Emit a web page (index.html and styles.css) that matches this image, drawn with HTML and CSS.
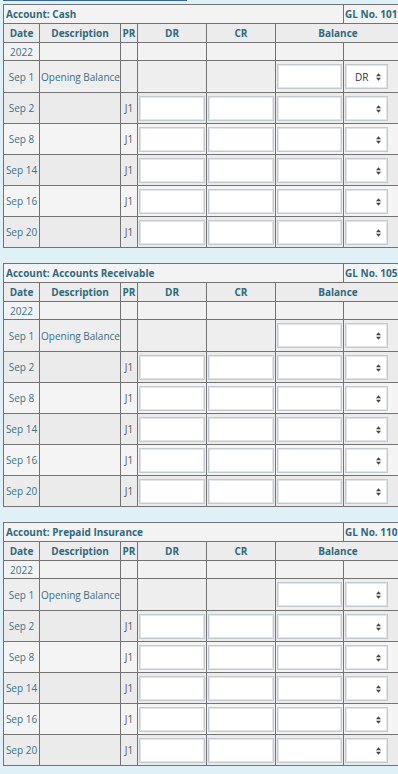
FILE: index.html
```html
<!DOCTYPE html>
<html>
<head>
<meta charset="utf-8">
<link rel="stylesheet" href="styles.css">
</head>
<body>
<div class="topline"></div>

<table class="ledger">
  <colgroup><col class="c-date"><col class="c-desc"><col class="c-pr"><col class="c-amt"><col class="c-amt"><col class="c-bal"><col class="c-sel"></colgroup>
  <tr class="title"><th colspan="6" class="acct">Account: Cash</th><th class="gl">GL No. 101</th></tr>
  <tr class="head"><th>Date</th><th>Description</th><th>PR</th><th>DR</th><th>CR</th><th colspan="2">Balance</th></tr>
  <tr class="year"><td class="date">2022</td><td></td><td></td><td></td><td></td><td></td><td></td></tr>
  <tr class="open"><td class="date">Sep 1</td><td class="desc">Opening Balance</td><td></td><td></td><td></td><td class="in"><input type="text"></td><td class="in"><span class="sel"><select><option>DR</option></select><svg class="arr" width="5" height="8" viewBox="0 0 5 8"><path d="M0 3.2 L2.5 0.2 L5 3.2Z M0 4.8 L2.5 7.8 L5 4.8Z"/></svg></span></td></tr>
  <tr class="dk"><td class="date">Sep 2</td><td></td><td class="pr">J1</td><td class="in"><input type="text"></td><td class="in"><input type="text"></td><td class="in"><input type="text"></td><td class="in"><span class="sel"><select><option></option></select><svg class="arr" width="5" height="8" viewBox="0 0 5 8"><path d="M0 3.2 L2.5 0.2 L5 3.2Z M0 4.8 L2.5 7.8 L5 4.8Z"/></svg></span></td></tr>
  <tr class="lt"><td class="date">Sep 8</td><td></td><td class="pr">J1</td><td class="in"><input type="text"></td><td class="in"><input type="text"></td><td class="in"><input type="text"></td><td class="in"><span class="sel"><select><option></option></select><svg class="arr" width="5" height="8" viewBox="0 0 5 8"><path d="M0 3.2 L2.5 0.2 L5 3.2Z M0 4.8 L2.5 7.8 L5 4.8Z"/></svg></span></td></tr>
  <tr class="dk"><td class="date">Sep 14</td><td></td><td class="pr">J1</td><td class="in"><input type="text"></td><td class="in"><input type="text"></td><td class="in"><input type="text"></td><td class="in"><span class="sel"><select><option></option></select><svg class="arr" width="5" height="8" viewBox="0 0 5 8"><path d="M0 3.2 L2.5 0.2 L5 3.2Z M0 4.8 L2.5 7.8 L5 4.8Z"/></svg></span></td></tr>
  <tr class="lt"><td class="date">Sep 16</td><td></td><td class="pr">J1</td><td class="in"><input type="text"></td><td class="in"><input type="text"></td><td class="in"><input type="text"></td><td class="in"><span class="sel"><select><option></option></select><svg class="arr" width="5" height="8" viewBox="0 0 5 8"><path d="M0 3.2 L2.5 0.2 L5 3.2Z M0 4.8 L2.5 7.8 L5 4.8Z"/></svg></span></td></tr>
  <tr class="dk"><td class="date">Sep 20</td><td></td><td class="pr">J1</td><td class="in"><input type="text"></td><td class="in"><input type="text"></td><td class="in"><input type="text"></td><td class="in"><span class="sel"><select><option></option></select><svg class="arr" width="5" height="8" viewBox="0 0 5 8"><path d="M0 3.2 L2.5 0.2 L5 3.2Z M0 4.8 L2.5 7.8 L5 4.8Z"/></svg></span></td></tr>
</table>

<table class="ledger">
  <colgroup><col class="c-date"><col class="c-desc"><col class="c-pr"><col class="c-amt"><col class="c-amt"><col class="c-bal"><col class="c-sel"></colgroup>
  <tr class="title"><th colspan="6" class="acct">Account: Accounts Receivable</th><th class="gl">GL No. 105</th></tr>
  <tr class="head"><th>Date</th><th>Description</th><th>PR</th><th>DR</th><th>CR</th><th colspan="2">Balance</th></tr>
  <tr class="year"><td class="date">2022</td><td></td><td></td><td></td><td></td><td></td><td></td></tr>
  <tr class="open"><td class="date">Sep 1</td><td class="desc">Opening Balance</td><td></td><td></td><td></td><td class="in"><input type="text"></td><td class="in"><span class="sel"><select><option></option></select><svg class="arr" width="5" height="8" viewBox="0 0 5 8"><path d="M0 3.2 L2.5 0.2 L5 3.2Z M0 4.8 L2.5 7.8 L5 4.8Z"/></svg></span></td></tr>
  <tr class="dk"><td class="date">Sep 2</td><td></td><td class="pr">J1</td><td class="in"><input type="text"></td><td class="in"><input type="text"></td><td class="in"><input type="text"></td><td class="in"><span class="sel"><select><option></option></select><svg class="arr" width="5" height="8" viewBox="0 0 5 8"><path d="M0 3.2 L2.5 0.2 L5 3.2Z M0 4.8 L2.5 7.8 L5 4.8Z"/></svg></span></td></tr>
  <tr class="lt"><td class="date">Sep 8</td><td></td><td class="pr">J1</td><td class="in"><input type="text"></td><td class="in"><input type="text"></td><td class="in"><input type="text"></td><td class="in"><span class="sel"><select><option></option></select><svg class="arr" width="5" height="8" viewBox="0 0 5 8"><path d="M0 3.2 L2.5 0.2 L5 3.2Z M0 4.8 L2.5 7.8 L5 4.8Z"/></svg></span></td></tr>
  <tr class="dk"><td class="date">Sep 14</td><td></td><td class="pr">J1</td><td class="in"><input type="text"></td><td class="in"><input type="text"></td><td class="in"><input type="text"></td><td class="in"><span class="sel"><select><option></option></select><svg class="arr" width="5" height="8" viewBox="0 0 5 8"><path d="M0 3.2 L2.5 0.2 L5 3.2Z M0 4.8 L2.5 7.8 L5 4.8Z"/></svg></span></td></tr>
  <tr class="lt"><td class="date">Sep 16</td><td></td><td class="pr">J1</td><td class="in"><input type="text"></td><td class="in"><input type="text"></td><td class="in"><input type="text"></td><td class="in"><span class="sel"><select><option></option></select><svg class="arr" width="5" height="8" viewBox="0 0 5 8"><path d="M0 3.2 L2.5 0.2 L5 3.2Z M0 4.8 L2.5 7.8 L5 4.8Z"/></svg></span></td></tr>
  <tr class="dk"><td class="date">Sep 20</td><td></td><td class="pr">J1</td><td class="in"><input type="text"></td><td class="in"><input type="text"></td><td class="in"><input type="text"></td><td class="in"><span class="sel"><select><option></option></select><svg class="arr" width="5" height="8" viewBox="0 0 5 8"><path d="M0 3.2 L2.5 0.2 L5 3.2Z M0 4.8 L2.5 7.8 L5 4.8Z"/></svg></span></td></tr>
</table>

<table class="ledger">
  <colgroup><col class="c-date"><col class="c-desc"><col class="c-pr"><col class="c-amt"><col class="c-amt"><col class="c-bal"><col class="c-sel"></colgroup>
  <tr class="title"><th colspan="6" class="acct">Account: Prepaid Insurance</th><th class="gl">GL No. 110</th></tr>
  <tr class="head"><th>Date</th><th>Description</th><th>PR</th><th>DR</th><th>CR</th><th colspan="2">Balance</th></tr>
  <tr class="year"><td class="date">2022</td><td></td><td></td><td></td><td></td><td></td><td></td></tr>
  <tr class="open"><td class="date">Sep 1</td><td class="desc">Opening Balance</td><td></td><td></td><td></td><td class="in"><input type="text"></td><td class="in"><span class="sel"><select><option></option></select><svg class="arr" width="5" height="8" viewBox="0 0 5 8"><path d="M0 3.2 L2.5 0.2 L5 3.2Z M0 4.8 L2.5 7.8 L5 4.8Z"/></svg></span></td></tr>
  <tr class="dk"><td class="date">Sep 2</td><td></td><td class="pr">J1</td><td class="in"><input type="text"></td><td class="in"><input type="text"></td><td class="in"><input type="text"></td><td class="in"><span class="sel"><select><option></option></select><svg class="arr" width="5" height="8" viewBox="0 0 5 8"><path d="M0 3.2 L2.5 0.2 L5 3.2Z M0 4.8 L2.5 7.8 L5 4.8Z"/></svg></span></td></tr>
  <tr class="lt"><td class="date">Sep 8</td><td></td><td class="pr">J1</td><td class="in"><input type="text"></td><td class="in"><input type="text"></td><td class="in"><input type="text"></td><td class="in"><span class="sel"><select><option></option></select><svg class="arr" width="5" height="8" viewBox="0 0 5 8"><path d="M0 3.2 L2.5 0.2 L5 3.2Z M0 4.8 L2.5 7.8 L5 4.8Z"/></svg></span></td></tr>
  <tr class="dk"><td class="date">Sep 14</td><td></td><td class="pr">J1</td><td class="in"><input type="text"></td><td class="in"><input type="text"></td><td class="in"><input type="text"></td><td class="in"><span class="sel"><select><option></option></select><svg class="arr" width="5" height="8" viewBox="0 0 5 8"><path d="M0 3.2 L2.5 0.2 L5 3.2Z M0 4.8 L2.5 7.8 L5 4.8Z"/></svg></span></td></tr>
  <tr class="lt"><td class="date">Sep 16</td><td></td><td class="pr">J1</td><td class="in"><input type="text"></td><td class="in"><input type="text"></td><td class="in"><input type="text"></td><td class="in"><span class="sel"><select><option></option></select><svg class="arr" width="5" height="8" viewBox="0 0 5 8"><path d="M0 3.2 L2.5 0.2 L5 3.2Z M0 4.8 L2.5 7.8 L5 4.8Z"/></svg></span></td></tr>
  <tr class="dk"><td class="date">Sep 20</td><td></td><td class="pr">J1</td><td class="in"><input type="text"></td><td class="in"><input type="text"></td><td class="in"><input type="text"></td><td class="in"><span class="sel"><select><option></option></select><svg class="arr" width="5" height="8" viewBox="0 0 5 8"><path d="M0 3.2 L2.5 0.2 L5 3.2Z M0 4.8 L2.5 7.8 L5 4.8Z"/></svg></span></td></tr>
</table>
</body>
</html>
```
FILE: styles.css
```css
html, body {
  margin: 0;
  padding: 0;
  background: #dff0f7;
  font-family: "Open Sans", Lato, sans-serif;
  font-size: 10px;
  color: #3a6f84;
  overflow: hidden;
}
.topline {
  width: 184px;
  margin-left: 3px;
  height: 0;
  border-top: 1px solid #3a6690;
  margin-bottom: 3px;
}
.ledger {
  border-collapse: collapse;
  table-layout: fixed;
  width: 397px;
  margin: 0 0 15px 3px;
  border: 1px solid #737373;
}
.c-date { width: 36px; }
.c-desc { width: 81px; }
.c-pr { width: 17px; }
.c-amt { width: 69px; }
.c-bal { width: 68px; }
.c-sel { width: 57px; }

.ledger th, .ledger td {
  border: 1px solid #737373;
  padding: 0 1px;
  overflow: hidden;
  white-space: nowrap;
  vertical-align: middle;
  line-height: 14px;
}
.ledger th {
  font-weight: bold;
  color: #2f6a7c;
  text-align: center;
}
.title th { background: #f3f3f3; height: 18px; text-align: left; }
.title .acct { padding-left: 2px; }
.title .gl { padding-left: 1px; }
.head th { background: #ececec; height: 18px; }
.year td { background: #f2f2f2; height: 17px; }
.open td { background: #eeeeee; height: 31px; }
.dk td { background: #ebebeb; height: 30px; }
.lt td { background: #f4f4f4; height: 30px; }

.date { text-align: center; color: #3d7387; }
.desc { text-align: left; padding-left: 1px; color: #3a6f84; }
.pr { text-align: center; color: #5a5a5a; }

.in input {
  display: block;
  box-sizing: border-box;
  width: 100%;
  height: 25px;
  margin: 0;
  border: 1px solid #c3c9d0;
  box-shadow: inset 0 0 0 1px #e2e6ea;
  background: #fff;
  padding: 0 3px;
  font: inherit;
}
.sel {
  position: relative;
  display: block;
  width: 43px;
  height: 25px;
}
.sel select {
  -webkit-appearance: none;
  appearance: none;
  box-sizing: border-box;
  width: 43px;
  height: 25px;
  margin: 0;
  border: 1px solid #c3c9d0;
  box-shadow: inset 0 0 0 1px #e2e6ea;
  background: #fff;
  border-radius: 0;
  padding: 0 0 0 9px;
  font: 10px "Open Sans", Lato, sans-serif;
  color: #333;
}
.arr {
  position: absolute;
  right: 7px;
  top: 9px;
  fill: #444;
  pointer-events: none;
}
```
